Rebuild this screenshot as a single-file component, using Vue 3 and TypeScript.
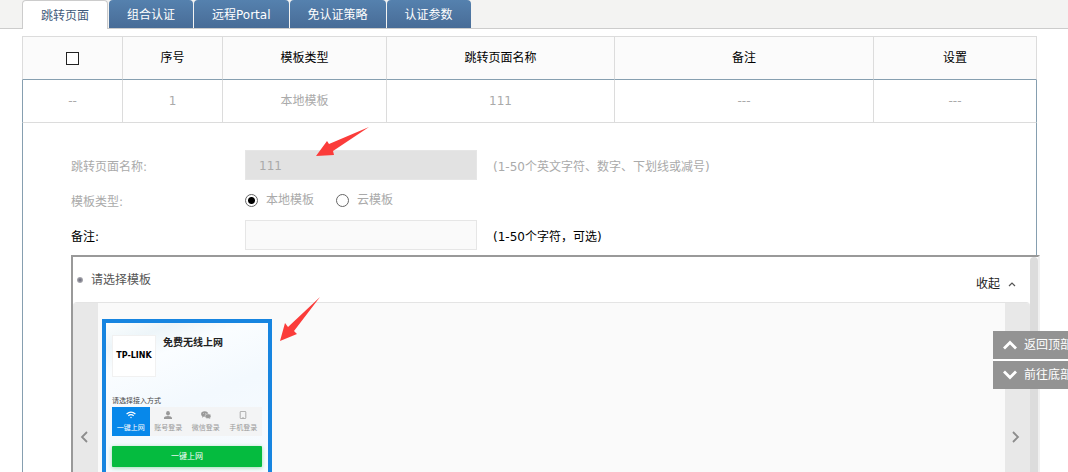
<script setup lang="ts">
import { ref } from 'vue'

const tabs = ['跳转页面', '组合认证', '远程Portal', '免认证策略', '认证参数']
const activeTab = ref(0)

const columns = ['序号', '模板类型', '跳转页面名称', '备注', '设置']
const row = ['--', '1', '本地模板', '111', '---', '---']

const pageName = ref('111')
const templateType = ref('local')
const remark = ref('')
const accessMode = ref('wifi')

const modes = [
  { id: 'wifi', label: '一键上网' },
  { id: 'account', label: '账号登录' },
  { id: 'wechat', label: '微信登录' },
  { id: 'phone', label: '手机登录' },
]
</script>

<template>
  <div class="page">
    <nav class="tabs">
      <button
        v-for="(tab, i) in tabs"
        :key="tab"
        type="button"
        class="tab"
        :class="{ active: i === activeTab }"
        @click="activeTab = i"
      >{{ tab }}</button>
    </nav>

    <main class="content">
      <table class="grid">
        <colgroup>
          <col class="c-check" />
          <col class="c-index" />
          <col class="c-type" />
          <col class="c-name" />
          <col class="c-remark" />
          <col class="c-set" />
        </colgroup>
        <thead>
          <tr>
            <th><input type="checkbox" class="check" aria-label="全选" /></th>
            <th v-for="c in columns" :key="c">{{ c }}</th>
          </tr>
        </thead>
        <tbody>
          <tr class="data">
            <td v-for="(cell, i) in row" :key="i">{{ cell }}</td>
          </tr>
          <tr>
            <td colspan="6" class="detail">
              <form class="form" @submit.prevent>
                <div class="field muted">
                  <label class="label" for="page-name">跳转页面名称:</label>
                  <input id="page-name" v-model="pageName" class="text" type="text" disabled />
                  <span class="hint">(1-50个英文字符、数字、下划线或减号)</span>
                </div>
                <div class="field muted" role="radiogroup" aria-labelledby="type-label">
                  <span id="type-label" class="label">模板类型:</span>
                  <label class="option"><input v-model="templateType" type="radio" name="type" value="local" class="radio" />本地模板</label>
                  <label class="option"><input v-model="templateType" type="radio" name="type" value="cloud" class="radio" />云模板</label>
                </div>
                <div class="field">
                  <label class="label" for="remark">备注:</label>
                  <input id="remark" v-model="remark" class="text" type="text" />
                  <span class="hint">(1-50个字符，可选)</span>
                </div>
              </form>

              <section class="picker">
                <div class="picker-main">
                  <header class="picker-head">
                    <span class="bullet"></span>
                    <h2 class="picker-title">请选择模板</h2>
                    <button type="button" class="collapse">
                      收起
                      <svg width="8" height="6" viewBox="0 0 8 6"><path d="M1 5 L4 2 L7 5" fill="none" stroke="#555" stroke-width="1.2" /></svg>
                    </button>
                  </header>
                  <div class="carousel">
                    <button type="button" class="side" aria-label="上一页">
                      <svg width="8" height="12" viewBox="0 0 8 12"><path d="M7 1 L2 6 L7 11" fill="none" stroke="#8c8c8c" stroke-width="1.8" /></svg>
                    </button>
                    <div class="slides">
                      <article class="card">
                        <div class="brand">
                          <div class="logo">TP-LINK</div>
                          <strong class="brand-name">免费无线上网</strong>
                        </div>
                        <p class="prompt">请选择接入方式</p>
                        <div class="modes">
                          <button
                            v-for="m in modes"
                            :key="m.id"
                            type="button"
                            class="mode"
                            :class="{ on: accessMode === m.id }"
                            @click="accessMode = m.id"
                          >
                            <svg v-if="m.id === 'wifi'" width="10" height="8" viewBox="0 0 10 8" fill="none" stroke="currentColor" stroke-width="1.2">
                              <path d="M.6 3 Q5 -.9 9.4 3" /><path d="M2.3 4.8 Q5 2.4 7.7 4.8" /><circle cx="5" cy="6.5" r=".7" fill="currentColor" stroke="none" />
                            </svg>
                            <svg v-else-if="m.id === 'account'" width="10" height="8" viewBox="0 0 10 8" fill="currentColor">
                              <ellipse cx="5" cy="2.2" rx="1.9" ry="2.2" /><path d="M1 8 V6.8 Q1.4 5.4 5 5.1 Q8.6 5.4 9 6.8 V8 Z" />
                            </svg>
                            <svg v-else-if="m.id === 'wechat'" width="10" height="8" viewBox="0 0 10 8" fill="currentColor">
                              <ellipse cx="3.6" cy="3" rx="3.5" ry="2.8" /><path d="M1.4 5 L1 6.8 L3 5.6 Z" /><ellipse cx="7" cy="5.2" rx="3" ry="2.4" stroke="#f3f4f5" stroke-width=".5" /><path d="M8 7 L9.2 8 L9 6.5 Z" />
                              <circle cx="2.5" cy="2.4" r=".4" fill="#fff" /><circle cx="4.7" cy="2.4" r=".4" fill="#fff" />
                            </svg>
                            <svg v-else width="10" height="8" viewBox="0 0 10 8" fill="none" stroke="currentColor" stroke-width=".8">
                              <rect x="2.2" y=".4" width="5.6" height="7.2" rx=".8" /><path d="M4.3 6.7 H5.7" />
                            </svg>
                            <span>{{ m.label }}</span>
                          </button>
                        </div>
                        <button type="button" class="go">一键上网</button>
                      </article>
                    </div>
                    <button type="button" class="side" aria-label="下一页">
                      <svg width="8" height="12" viewBox="0 0 8 12"><path d="M1 1 L6 6 L1 11" fill="none" stroke="#8c8c8c" stroke-width="1.8" /></svg>
                    </button>
                  </div>
                </div>
                <div class="scrollbar"></div>
              </section>
            </td>
          </tr>
        </tbody>
      </table>
    </main>

    <svg class="arrow arrow-name" width="54" height="30" viewBox="0 0 54 30" aria-hidden="true">
      <path d="M0 29 L11 14 L13 17 L53 0 L17 24 L18 28 Z" fill="#fb3c3a" />
    </svg>
    <svg class="arrow arrow-card" width="42" height="46" viewBox="0 0 42 46" aria-hidden="true">
      <path d="M0 45 L5 27 L8 31 L40 1 L14 35 L17 38 Z" fill="#fb3c3a" />
    </svg>

    <aside class="jump">
      <button type="button">
        <svg width="14" height="10" viewBox="0 0 14 10"><path d="M1 8.5 L7 2.5 L13 8.5" fill="none" stroke="#fff" stroke-width="2.8" /></svg>
        返回顶部
      </button>
      <button type="button">
        <svg width="14" height="10" viewBox="0 0 14 10"><path d="M1 1.5 L7 7.5 L13 1.5" fill="none" stroke="#fff" stroke-width="2.8" /></svg>
        前往底部
      </button>
    </aside>
  </div>
</template>

<style>
body {
  margin: 0;
  background: #fff;
}
</style>

<style scoped>
.page {
  position: relative;
  height: 100vh;
  overflow: hidden;
  font: 12px/16px "DejaVu Sans", "Noto Sans CJK SC", sans-serif;
  color: #000;
}
.page * {
  box-sizing: border-box;
}
button,
input {
  font: inherit;
  margin: 0;
}
button {
  border: 0;
  padding: 0;
  background: none;
  cursor: pointer;
}
.tabs {
  display: flex;
  align-items: flex-start;
  gap: 1px;
  height: 29px;
  padding-left: 22px;
  background: #f3f3f2;
  border-bottom: 1px solid #ccc;
}
.tab {
  height: 28px;
  padding: 2px 18px 0;
  border-radius: 4px 4px 0 0;
  background: linear-gradient(#5581ae, #486c97);
  color: #fff;
  white-space: nowrap;
}
.tab.active {
  height: 29px;
  border: 1px solid #ccc;
  border-bottom: 0;
  background: #fff;
  color: #3f5a7a;
}
.content {
  padding: 7px 31px 0 22px;
}
.grid {
  width: 100%;
  table-layout: fixed;
  border-collapse: separate;
  border-spacing: 0;
}
.c-check { width: 101px; }
.c-index { width: 100px; }
.c-type { width: 164px; }
.c-name { width: 228px; }
.c-set { width: 163px; }
th,
td {
  padding: 0;
  text-align: center;
  font-weight: normal;
}
th {
  height: 44px;
  border: 1px solid #dcdcdc;
  border-left-width: 0;
  border-bottom-color: #869fb0;
  background: #fbfbfb;
}
th:first-child {
  border-left-width: 1px;
}
.check {
  appearance: none;
  display: block;
  width: 13px;
  height: 13px;
  margin: 0 auto;
  border: 1px solid #222;
  background: #fff;
}
.data td {
  height: 43px;
  border-right: 1px solid #dcdcdc;
  border-bottom: 1px solid #dcdcdc;
  color: #aaa;
}
.data td:first-child {
  border-left: 1px solid #869fb0;
}
.data td:last-child {
  border-right-color: #869fb0;
}
.detail {
  padding: 27px 0 0 48px;
  border: solid #869fb0;
  border-width: 0 1px;
  text-align: left;
}
.form {
  display: grid;
  gap: 5px;
}
.field {
  display: flex;
  align-items: center;
  height: 30px;
}
.muted {
  color: #aaa;
}
.label {
  width: 174px;
  padding-top: 3px;
}
.text {
  width: 232px;
  height: 30px;
  padding: 2px 13px 0;
  border: 1px solid #e6e6e6;
  background: #fafafa;
}
.text:disabled {
  background: #e2e2e2;
  color: #aaa;
}
.hint {
  padding: 3px 0 0 16px;
}
.option {
  display: flex;
  align-items: center;
  gap: 8px;
  margin-right: 22px;
}
.radio {
  appearance: none;
  width: 13px;
  height: 13px;
  border: 1px solid #666;
  border-radius: 50%;
  background: #fff;
}
.radio:checked {
  background: radial-gradient(#000 3px, #fff 4px);
}
.picker {
  display: flex;
  margin: 5px -4px 0 0;
  border: 2px solid #999;
  border-right-color: #f0f0f0;
  border-bottom-color: #f0f0f0;
  background: #fff;
  position: relative;
}
.picker-main {
  flex: 1;
}
.scrollbar {
  width: 8px;
  border-radius: 4px 4px 0 0;
  background: #dcdcdc;
}
.picker-head {
  display: flex;
  align-items: center;
  height: 45px;
  padding: 0 14px 0 4px;
}
.bullet {
  width: 6px;
  height: 6px;
  margin-right: 8px;
  border-radius: 50%;
  background: radial-gradient(#667, #ccc);
}
.picker-title {
  flex: 1;
  margin: 0;
  font-size: 12px;
  font-weight: normal;
  color: #555;
}
.collapse {
  display: flex;
  align-items: center;
  gap: 8px;
  padding-top: 8px;
  color: #222;
}
.carousel {
  display: flex;
  height: 268px;
  border-top: 1px solid #e4e4e4;
  border-radius: 4px 4px 0 0;
  overflow: hidden;
  background: #fafafa;
}
.side {
  display: flex;
  align-items: center;
  justify-content: center;
  width: 25px;
  padding-right: 4px;
  background: #e8e8e8;
}
.slides {
  flex: 1;
  padding: 16px 4px 0;
}
.card {
  width: 170px;
  height: 240px;
  padding: 12px 6px;
  border: 4px solid #1785e0;
  background: linear-gradient(160deg, #fbfefe, #edf5f9 24px, #fafdff 48px, #f3f9fe 100px, #fbfdff);
}
.brand {
  display: flex;
  gap: 7px;
}
.logo {
  display: flex;
  align-items: center;
  justify-content: center;
  width: 44px;
  height: 42px;
  border: 1px solid #f1f1f1;
  background: #fff;
  font: bold 8px/10px "DejaVu Sans", sans-serif;
  white-space: nowrap;
}
.brand-name {
  font-size: 10px;
  color: #222;
}
.prompt {
  margin: 19px 0 1px;
  font-size: 7px;
  line-height: 10px;
  color: #444;
}
.modes {
  display: grid;
  grid-template-columns: repeat(4, 1fr);
  height: 29px;
  background: #f3f4f5;
}
.mode {
  display: flex;
  flex-direction: column;
  align-items: center;
  gap: 3px;
  padding-top: 4px;
  font-size: 7px;
  line-height: 12px;
  color: #999;
  white-space: nowrap;
}
.mode.on {
  background: #0788ea;
  color: #fff;
}
.go {
  width: 100%;
  height: 21px;
  margin-top: 10px;
  border-radius: 1px;
  background: #05bb3f;
  box-shadow: 0 1px 4px #9edcb2;
  color: #fff;
  font-size: 8px;
  display: block;
}
.arrow {
  position: absolute;
}
.arrow-name {
  left: 316px;
  top: 127px;
}
.arrow-card {
  left: 280px;
  top: 296px;
}
.jump {
  position: absolute;
  top: 331px;
  right: 0;
  display: grid;
  gap: 2px;
  width: 75px;
  overflow: hidden;
  background: #fff;
}
.jump button {
  display: flex;
  align-items: center;
  gap: 7px;
  height: 28px;
  padding-left: 10px;
  background: #939393;
  color: #fff;
  white-space: nowrap;
}
.jump svg {
  flex: none;
}
</style>
